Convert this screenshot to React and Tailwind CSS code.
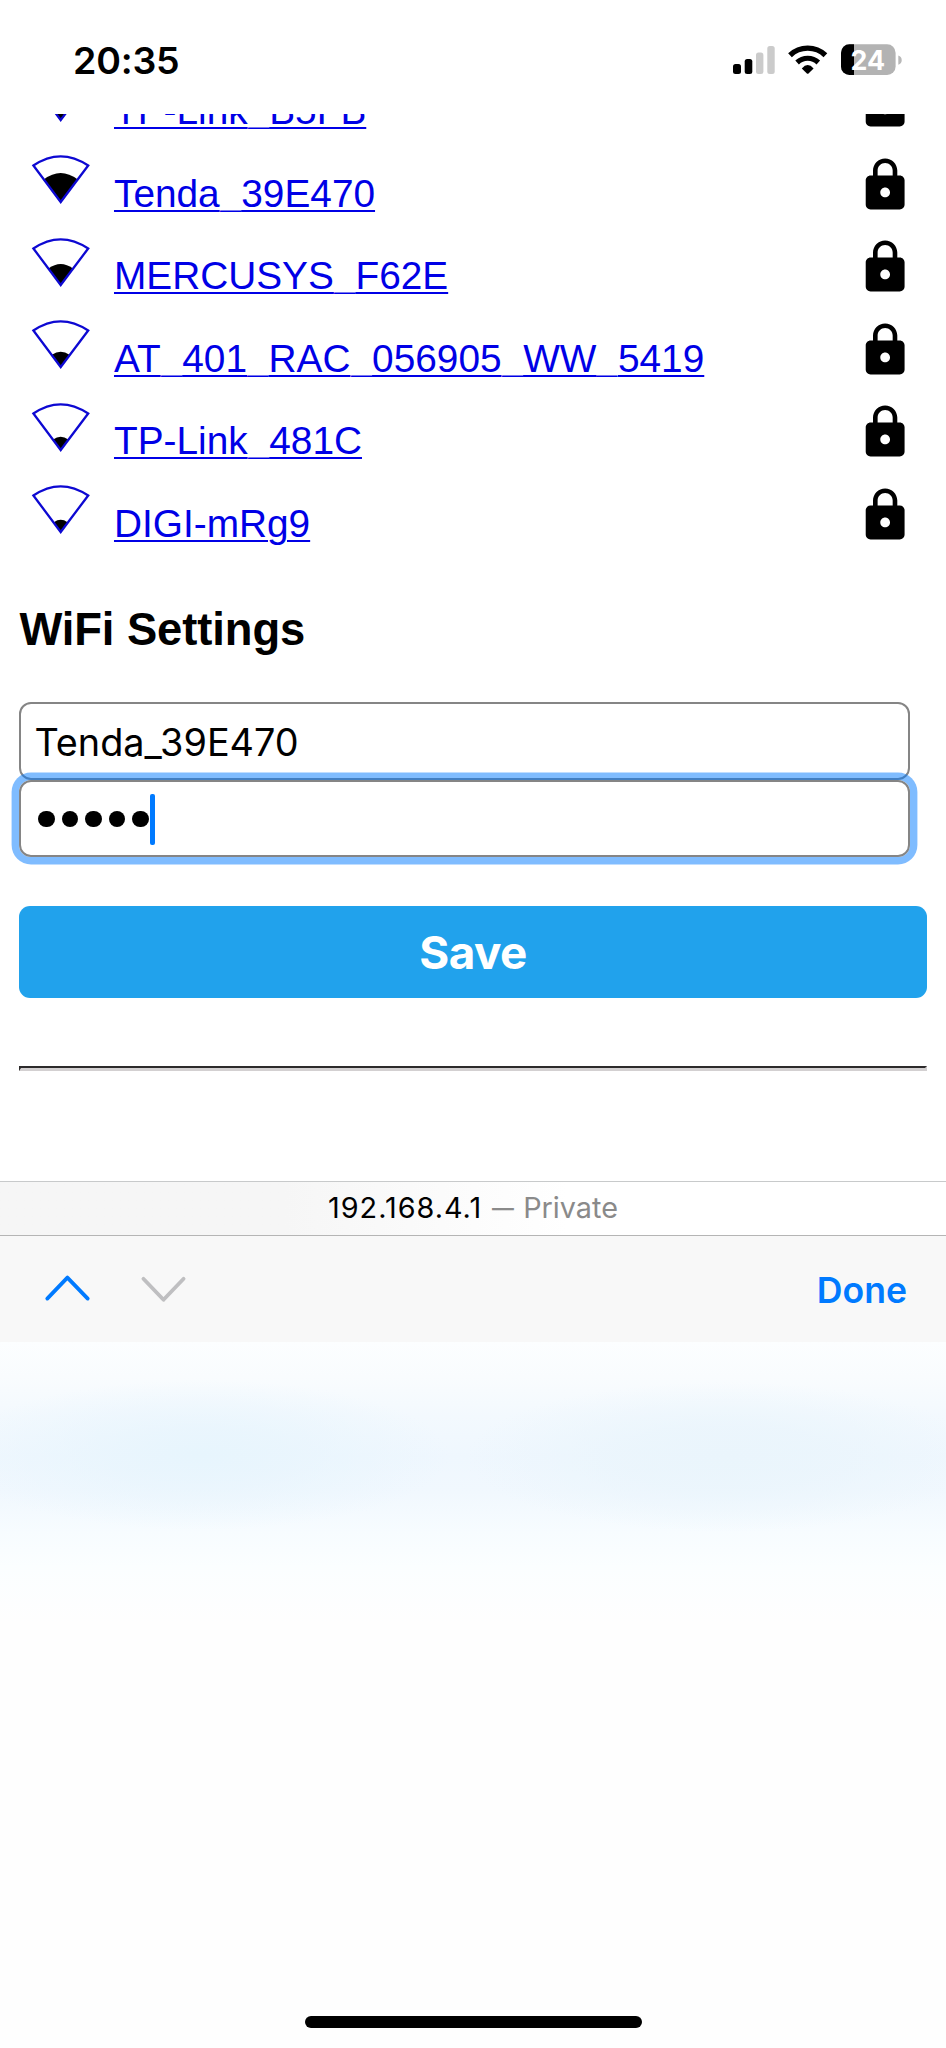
import { Fragment } from "react";

const LOCK =
  "M18 8h-1V6c0-2.76-2.24-5-5-5S7 3.24 7 6v2H6c-1.1 0-2 .9-2 2v10c0 1.1.9 2 2 2h12c1.1 0 2-.9 2-2V10c0-1.1-.9-2-2-2zm-6 9c-1.1 0-2-.9-2-2s.9-2 2-2 2 .9 2 2-.9 2-2 2zm3.1-9H8.9V6c0-1.71 1.39-3.1 3.1-3.1 1.71 0 3.1 1.39 3.1 3.1v2z";

// fill: height of the filled part above the tip; half and shoulder: where its arc meets the sides
const NETWORKS = [
  { name: "TP-Link_B5FB", fill: 30, half: 17, shoulder: 24 },
  { name: "Tenda_39E470", fill: 30, half: 17, shoulder: 23.5 },
  { name: "MERCUSYS_F62E", fill: 22, half: 12.3, shoulder: 17.5 },
  { name: "AT_401_RAC_056905_WW_5419", fill: 16.2, half: 8.8, shoulder: 13.2 },
  { name: "TP-Link_481C", fill: 14.2, half: 7.6, shoulder: 11.6 },
  { name: "DIGI-mRg9", fill: 13.2, half: 6.8, shoulder: 10.8 },
];

function Signal({ fill, half, shoulder }) {
  const top = 48 - fill * 2 + shoulder;
  const y = 48 - shoulder;
  return (
    <svg width="60" height="52" viewBox="0 0 60 52" className="ml-[11.6px] shrink-0">
      <path d={`M29.7 48 L${29.7 - half} ${y} Q29.7 ${top} ${29.7 + half} ${y} Z`} fill="#000" />
      <path d="M29.7 47 L2.4 10.5 Q29.5 -7.9 57.2 10.5 Z" fill="none" stroke="#0d08d2" strokeWidth="2.3" />
    </svg>
  );
}

function Network({ name, ...signal }) {
  return (
    <li className="flex h-[82.5px] items-start">
      <Signal {...signal} />
      <a className="ml-[23px] mt-[15.6px] grow font-['Liberation_Sans',sans-serif] text-[38.8px] leading-[45px] text-[#0000e6] underline decoration-[2.4px] underline-offset-[3px]">
        {name.split("_").map((part, i) => (
          <Fragment key={i}>
            {i > 0 && (
              <span className="inline-block origin-bottom -translate-y-[3.7px] scale-x-[0.96] scale-y-60">_</span>
            )}
            {part}
          </Fragment>
        ))}
      </a>
      <svg width="58.3" height="58.3" viewBox="0 0 24 24" className="mr-[12px] mt-[0.6px] shrink-0">
        <path d={LOCK} />
      </svg>
    </li>
  );
}

function StatusBar() {
  return (
    <header className="flex h-[114px] shrink-0 items-start justify-between pl-[73px] pr-[43px]">
      <time className="mt-[38px] text-[37.5px] font-semibold leading-[46px] tracking-[-0.2px]">20:35</time>
      <svg width="170" height="34" viewBox="733 43 170 34" className="mt-[43px]">
        <rect x="733" y="64" width="8" height="10" rx="2.5" />
        <rect x="744.7" y="59" width="7.6" height="15" rx="2.5" />
        <rect x="756" y="52.5" width="7.4" height="21.5" rx="2.5" fill="#cbcbcb" />
        <rect x="767.3" y="46" width="7.4" height="28" rx="2.5" fill="#cbcbcb" />
        <path d="M790 55.2 A25.6 25.6 0 0 1 825.4 55.2" fill="none" stroke="#000" strokeWidth="5.4" />
        <path d="M797.1 62.5 A15.4 15.4 0 0 1 818.3 62.5" fill="none" stroke="#000" strokeWidth="5.2" />
        <path d="M801.8 68.4 Q807.7 61.8 813.6 68.4 L808.5 73.4 Q807.7 74 806.9 73.4 Z" />
        <clipPath id="cell">
          <rect x="841" y="44.3" width="54.6" height="30.7" rx="8.5" />
        </clipPath>
        <g clipPath="url(#cell)">
          <rect x="841" y="44" width="55" height="32" fill="#b3b3b3" />
          <rect x="841" y="44" width="13" height="32" />
        </g>
        <path d="M898.3 55.5 a4.8 4.8 0 0 1 0 9.2 Z" fill="#b8b8b8" />
        <text x="867.8" y="69.6" textAnchor="middle" fontFamily="Inter, sans-serif" fontWeight="700" fontSize="26.8" fill="#fff">
          24
        </text>
      </svg>
    </header>
  );
}

export default function App() {
  return (
    <div className="flex h-[2048px] w-[946px] flex-col overflow-hidden bg-white font-['Inter',sans-serif] text-black">
      <StatusBar />
      <main className="flex h-[1067px] shrink-0 flex-col overflow-hidden px-[19.4px]">
        <ul className="-mt-[41.2px] h-[495px] shrink-0">
          {NETWORKS.map((n) => (
            <Network key={n.name} {...n} />
          ))}
        </ul>
        <h3 className="mt-[36px] shrink-0 font-['Liberation_Sans',sans-serif] text-[45.4px] font-bold leading-[52px] tracking-[-0.1px]">
          WiFi Settings
        </h3>
        <div className="mt-[46.4px] flex h-[77.4px] w-[890.5px] shrink-0 items-center rounded-[12px] border-2 border-[#858585] pl-[13px] pt-[2px] text-[37.8px] leading-[46px]">
          Tenda_39E470
        </div>
        <div className="relative flex h-[77.6px] w-[890.5px] shrink-0 items-center gap-[7px] rounded-[12px] border-2 border-[#858585] pl-[16.6px] pt-[1.4px] shadow-[0_0_0_7.4px_rgba(0,122,255,0.5)]">
          {[0, 1, 2, 3, 4].map((i) => (
            <span key={i} className="size-[16.6px] rounded-full bg-black" />
          ))}
          <span className="-ml-[5.6px] h-[51px] w-[5px] rounded-[2px] bg-[#007aff]" />
        </div>
        <button className="mt-[48.6px] h-[92px] shrink-0 rounded-[11px] bg-[#21a2ec] pt-[2px] text-[45.8px] font-bold leading-[56px] tracking-[-0.5px] text-white">
          Save
        </button>
        <hr className="mt-[68px] h-[5px] shrink-0 border-2 border-b-3 border-b-[#d3d0d1] border-l-[#2c2a2b] border-r-[#d3d0d1] border-t-[#2c2a2b]" />
      </main>
      <div className="flex h-[54px] shrink-0 items-center justify-center border-t border-[#c8cacb] bg-linear-to-r from-[#f6f6f6] from-30% to-white to-60% pb-px text-[28.8px] leading-[36px]">
        <span className="tracking-[1px]">192.168.4.1</span>
        <span className="ml-[10px] mr-[9px] flex w-[22px] scale-x-[0.76] justify-center text-[#8a8a8a]">—</span>
        <span className="text-[#8a8a8a]">Private</span>
      </div>
      <div className="flex h-[107px] shrink-0 items-center border-t border-[#b5b5b5] bg-[#f8f8f8] pl-[44px] pr-[39px]">
        <svg width="144" height="32" viewBox="44 1273.4 144 32" fill="none" strokeWidth="3.8" strokeLinecap="round" strokeLinejoin="round">
          <path d="M47.3 1299 L67.4 1278 L87.7 1299" stroke="#007aff" />
          <path d="M143.4 1279.2 L163.5 1300.2 L183.6 1279.2" stroke="#bfbfc1" />
        </svg>
        <span className="ml-auto mt-[3px] text-[35.6px] font-semibold leading-[44px] text-[#007aff]">Done</span>
      </div>
      <div className="flex grow flex-col justify-end bg-[radial-gradient(ellipse_250px_75px_at_200px_113px,#e7f5fd_0%,#e8f5fdcc_35%,#e8f5fd00_100%),radial-gradient(ellipse_260px_75px_at_725px_115px,#eaf5fc_0%,#eaf5fccc_40%,#eaf5fc00_100%),linear-gradient(to_bottom,#fcfeff_0px,#f9fcfe_35px,#f3f9fe_75px,#eff7fe_115px,#f1f8fe_150px,#f7fcff_190px,#fbfeff_225px,#fefefe_280px,#fefefe_100%)]">
        <div className="mb-[20px] ml-[305px] h-[12px] w-[337px] rounded-full bg-black" />
      </div>
    </div>
  );
}
